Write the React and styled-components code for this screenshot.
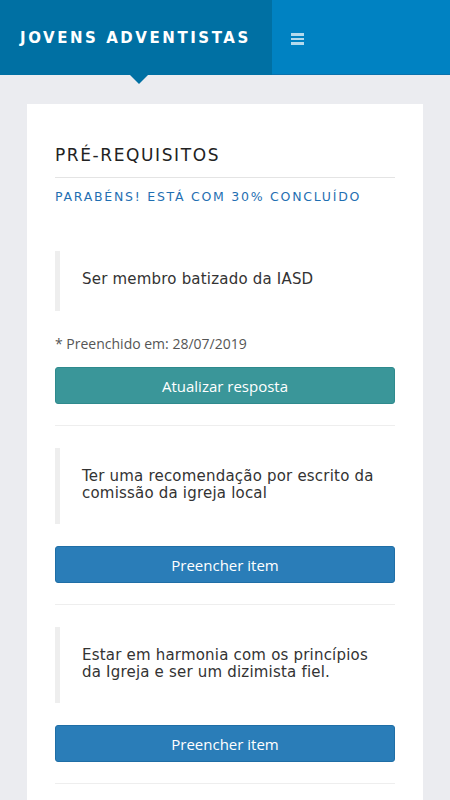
import React from "react";
import styled, { createGlobalStyle } from "styled-components";

const GlobalStyle = createGlobalStyle`
  html, body {
    margin: 0;
    padding: 0;
    background: #ebecf0;
  }
  * {
    box-sizing: border-box;
  }
`;

const Page = styled.div`
  min-height: 800px;
  background: #ebecf0;
  font-family: "DejaVu Sans", sans-serif;
`;

const Header = styled.header`
  display: flex;
  height: 75px;
  background: #0082c2;
  border-bottom: 1px solid #0a72ad;
`;

const Brand = styled.div`
  position: relative;
  width: 272px;
  height: 75px;
  background: #0070a3;
  display: flex;
  align-items: center;
  padding-left: 20px;
  color: #fff;
  font-weight: bold;
  font-size: 15px;
  letter-spacing: 2.55px;

  &::after {
    content: "";
    position: absolute;
    left: 130px;
    bottom: -9px;
    border-left: 9px solid transparent;
    border-right: 9px solid transparent;
    border-top: 9px solid #0070a3;
  }
`;

const Burger = styled.button`
  background: none;
  border: none;
  padding: 0;
  margin-left: 19px;
  margin-top: 4px;
  display: flex;
  flex-direction: column;
  gap: 2px;
  align-self: center;

  span {
    display: block;
    width: 13px;
    height: 2.5px;
    background: rgba(255, 255, 255, 0.7);
  }
`;

const Main = styled.main`
  padding: 29px 27px 0;
`;

const Card = styled.section`
  background: #fff;
  padding: 41px 28px 0;
  min-height: 700px;
`;

const Title = styled.h2`
  margin: 0;
  font-weight: normal;
  font-size: 17px;
  letter-spacing: 1.6px;
  color: #222;
  padding-bottom: 12px;
  border-bottom: 1px solid #e4e4e4;
`;

const Progress = styled.p`
  margin: 11px 0 0;
  font-size: 12.5px;
  letter-spacing: 1.75px;
  color: #1f6fb2;
`;

const Item = styled.div`
  padding: ${(p) => (p.first ? "47px" : "22px")} 0 21px;
  border-bottom: 1px solid #eeeeee;
`;

const Quote = styled.blockquote`
  margin: 0;
  border-left: 5px solid #eeeeee;
  padding: 20px 14px 20px 22px;
  font-size: 15px;
  letter-spacing: 0.2px;
  line-height: 17px;
  color: #333;
  min-height: ${(p) => (p.single ? "60px" : "76px")};
`;

const Filled = styled.p`
  margin: 24px 0 14px;
  font-family: "Open Sans", sans-serif;
  font-size: 14px;
  line-height: 18px;
  color: #555;
`;

const ActionButton = styled.button`
  display: block;
  width: 100%;
  height: 37px;
  margin-top: ${(p) => (p.tight ? "0" : "22px")};
  border: 1px solid ${(p) => (p.variant === "update" ? "#2f8a8d" : "#1f6ea6")};
  border-radius: 3px;
  background: ${(p) => (p.variant === "update" ? "#3a9699" : "#2a7db8")};
  color: #fff;
  font-family: "Open Sans", sans-serif;
  font-size: 15px;
`;

const items = [
  {
    text: "Ser membro batizado da IASD",
    filled: "28/07/2019",
  },
  {
    text: "Ter uma recomendação por escrito da comissão da igreja local",
  },
  {
    text: "Estar em harmonia com os princípios da Igreja e ser um dizimista fiel.",
  },
];

export default function App() {
  return (
    <>
      <GlobalStyle />
      <Page>
        <Header>
          <Brand>JOVENS ADVENTISTAS</Brand>
          <Burger aria-label="menu">
            <span />
            <span />
            <span />
          </Burger>
        </Header>
        <Main>
          <Card>
            <Title>PRÉ-REQUISITOS</Title>
            <Progress>PARABÉNS! ESTÁ COM 30% CONCLUÍDO</Progress>
            {items.map((item, i) => (
              <Item key={i} first={i === 0}>
                <Quote single={!!item.filled}>{item.text}</Quote>
                {item.filled ? (
                  <>
                    <Filled>* Preenchido em: {item.filled}</Filled>
                    <ActionButton variant="update" tight>
                      Atualizar resposta
                    </ActionButton>
                  </>
                ) : (
                  <ActionButton>Preencher item</ActionButton>
                )}
              </Item>
            ))}
          </Card>
        </Main>
      </Page>
    </>
  );
}
